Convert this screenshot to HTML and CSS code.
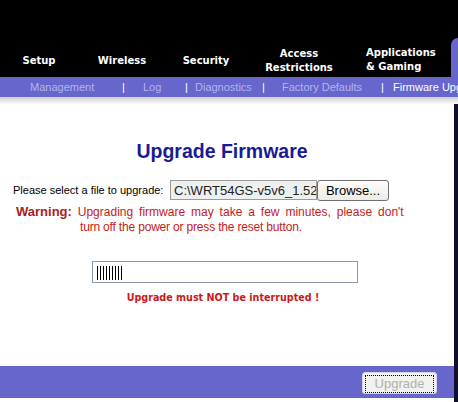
FILE: index.html
```html
<!DOCTYPE html>
<html lang="en">
<head>
    <meta charset="UTF-8">
    <meta name="viewport" content="width=device-width, initial-scale=1.0">
    <title>Upgrade Firmware</title>
    <link rel="stylesheet" href="styles.css">
</head>
<body>
    <header class="topbar">
        <nav class="tabs">
            <a class="tab tab-setup" href="#">Setup</a>
            <a class="tab tab-wireless" href="#">Wireless</a>
            <a class="tab tab-security" href="#">Security</a>
            <a class="tab tab-access" href="#">Access<br>Restrictions</a>
            <a class="tab tab-apps" href="#">Applications<br>&amp; Gaming</a>
            <span class="tab-active"></span>
        </nav>
    </header>

    <nav class="subnav">
        <span></span>
        <a href="#">Management</a>
        <span class="sep">|</span>
        <a href="#">Log</a>
        <span class="sep">|</span>
        <a href="#">Diagnostics</a>
        <span class="sep">|</span>
        <a href="#">Factory Defaults</a>
        <span class="sep">|</span>
        <a class="current" href="#">Firmware Upgrade</a>
    </nav>
    <div class="shade"></div>

    <div class="frame">
        <section class="main">
            <h2>Upgrade Firmware</h2>

            <div class="file-row">
                <label for="fw-file">Please select a file to upgrade:</label>
                <div class="file-input" id="fw-file">C:\WRT54GS-v5v6_1.52.bin</div>
                <button class="browse">Browse...</button>
            </div>

            <p class="warning">
                <span class="line1"><b>Warning:</b> Upgrading firmware may take a few minutes, please don't</span>
                <span class="line2">turn off the power or press the reset button.</span>
            </p>

            <div class="progress">
                <div class="progress-bars"></div>
            </div>

            <p class="note">Upgrade must NOT be interrupted !</p>
        </section>

        <footer class="actions">
            <button class="upgrade" disabled><span>Upgrade</span></button>
        </footer>
        <div class="bottom"></div>
    </div>
</body>
</html>
```
FILE: styles.css
```css
/* General */
body {
    margin: 0;
    padding: 0;
    width: 458px;
    overflow: hidden;
    font-family: "Liberation Sans", Arial, sans-serif;
    background-color: #fff;
}

a {
    text-decoration: none;
}

/* Top tabs */
.topbar {
    background-color: #000;
    height: 77px;
}

.tabs {
    display: flex;
    align-items: flex-end;
    height: 77px;
}

.tab {
    display: flex;
    align-items: center;
    justify-content: center;
    height: 33px;
    color: #fff;
    font-family: "DejaVu Sans", Verdana, sans-serif;
    font-size: 10px;
    font-weight: bold;
    line-height: 14px;
    text-align: center;
}

.tab-setup { width: 78px; }
.tab-wireless { width: 88px; }
.tab-security { width: 80px; }
.tab-access { width: 106px; }

.tab-apps {
    width: 85px;
    height: 35px;
    padding-left: 14px;
    justify-content: flex-start;
    text-align: left;
}

.tab-active {
    flex: 1;
    height: 39px;
    background-color: #6666cc;
    border-top-left-radius: 8px;
}

/* Sub navigation */
.subnav {
    display: grid;
    grid-template-columns: 30px 92px 21px 42px 10px 67px 20px 99px 12px auto;
    align-items: center;
    height: 20px;
    background-color: #6666cc;
    font-size: 11px;
    white-space: nowrap;
    overflow: hidden;
}

.subnav a {
    color: #b4b4ee;
}

.subnav .sep {
    color: #fff;
}

.subnav .current {
    color: #fff;
}

.shade {
    height: 7px;
    background: linear-gradient(#cdcdd8, #eeeeee 70%, #fafafa);
}

/* Content */
.frame {
    border-right: 4px solid #10102e;
}

.main {
    height: 262px;
    padding-right: 10px;
    background-color: #fff;
}

.main h2 {
    margin: 0;
    padding-top: 36px;
    font-size: 19.5px;
    line-height: 22px;
    color: #1a1a94;
    text-align: center;
}

.file-row {
    display: flex;
    align-items: center;
    margin-top: 18px;
    padding-left: 13px;
    height: 20px;
}

.file-row label {
    width: 157px;
    font-size: 11px;
    color: #000;
}

.file-input {
    box-sizing: border-box;
    width: 147px;
    height: 20px;
    padding: 2px 0 0 3px;
    border: 1px solid #9a9a9a;
    background-color: #eef0f0;
    font-size: 13px;
    line-height: 16px;
    color: #222;
    white-space: nowrap;
    overflow: hidden;
}

.browse {
    box-sizing: border-box;
    width: 72px;
    height: 21px;
    padding: 0;
    border: 1px solid #707070;
    border-radius: 3px;
    background: linear-gradient(#fdfdfb, #ecebe6);
    font-family: "Liberation Sans", Arial, sans-serif;
    font-size: 13px;
    color: #000;
}

.warning {
    margin: 4px 0 0 0;
    font-size: 12px;
    line-height: 15px;
    color: #c42020;
    white-space: nowrap;
}

.warning span {
    display: block;
}

.warning .line1 {
    padding-left: 16px;
    word-spacing: 2.6px;
    height: 16px;
}

.warning .line2 {
    padding-left: 80px;
    letter-spacing: -0.18px;
}

.warning b {
    color: #a81c1c;
    font-size: 13px;
    word-spacing: 0;
}

.progress {
    box-sizing: border-box;
    width: 266px;
    height: 22px;
    margin: 26px 0 0 92px;
    padding: 4px 0 0 4px;
    border: 1px solid #8899aa;
}

.progress-bars {
    width: 26px;
    height: 14px;
    background: repeating-linear-gradient(90deg, #000 0 1px, transparent 1px 3px);
}

.note {
    margin: 9px 0 0 0;
    padding-left: 2px;
    font-family: "DejaVu Sans", Verdana, sans-serif;
    font-size: 9.6px;
    font-weight: bold;
    line-height: 12px;
    color: #cc1818;
    text-align: center;
}

/* Bottom bar */
.actions {
    display: flex;
    justify-content: flex-end;
    align-items: flex-start;
    height: 32px;
    padding: 6px 17px 0 0;
    box-sizing: border-box;
    background-color: #6666cc;
}

.upgrade {
    box-sizing: border-box;
    width: 75px;
    height: 22px;
    padding: 2px;
    border: 1px solid #d4d4e8;
    border-radius: 3px;
    background-color: #f2f2ee;
    font-family: "Liberation Sans", Arial, sans-serif;
    font-size: 13px;
    color: #b0b0b0;
}

.upgrade span {
    display: block;
    height: 16px;
    line-height: 15px;
    border: 1px dotted #000;
}

.bottom {
    height: 4px;
    background-color: #fff;
}
```
